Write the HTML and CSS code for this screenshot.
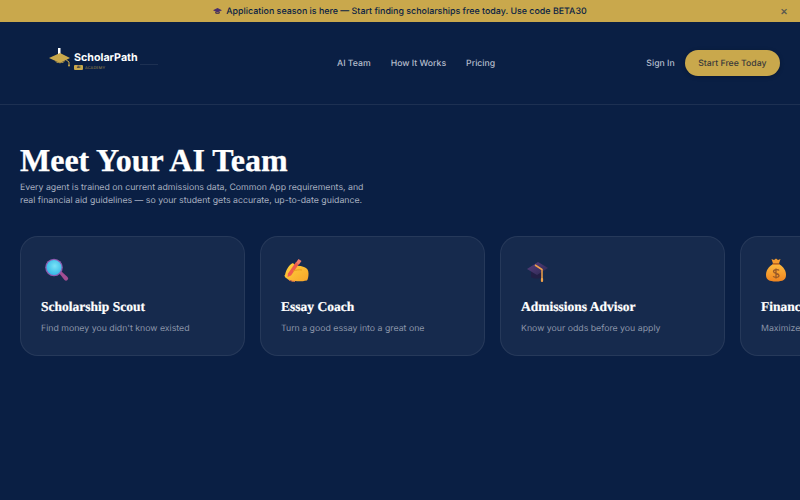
FILE: index.html
```html
<!DOCTYPE html>
<html lang="en">
<head>
<meta charset="utf-8">
<title>ScholarPath</title>
<link rel="stylesheet" href="styles.css">
</head>
<body>
<div class="banner">
  <span class="banner-msg">
    <svg class="banner-cap" viewBox="0 0 12 10"><path d="M0 4 6 1l6 3-6 3z" fill="#4a2f6b"/><path d="M3 6v2c1.500 1 4.500 1 6 0V6L6 7.500z" fill="#33234f"/></svg>
    <span>Application season is here — Start finding scholarships free today. Use code BETA30</span>
  </span>
  <span class="banner-close">×</span>
</div>
<header class="nav">
  <a class="logo">
    <svg class="logo-cap" viewBox="0 0 22 19"><rect x="9" y="0" width="2.500" height="6" fill="#fff"/><path d="M0 10 11 5l10 5-10 5z" fill="#c9a84c"/><path d="M6 13c2 3 8 3 10 0l-5 2z" fill="#c9a84c"/><path d="M16 11l4 3v3" fill="none" stroke="#c9a84c" stroke-width="1"/><circle cx="20" cy="17.500" r="1" fill="#c9a84c"/></svg>
    <span class="logo-text">
      <span class="logo-name">ScholarPath</span>
      <span class="logo-sub"><span class="logo-ai">AI</span><span class="logo-academy">ACADEMY</span></span>
    </span>
  </a>
  <nav class="links">
    <a>AI Team</a>
    <a>How It Works</a>
    <a>Pricing</a>
  </nav>
  <div class="actions">
    <a class="signin">Sign In</a>
    <a class="cta">Start Free Today</a>
  </div>
</header>
<main class="hero">
  <h1>Meet Your AI Team</h1>
  <p class="lead">Every agent is trained on current admissions data, Common App requirements, and real financial aid guidelines — so your student gets accurate, up-to-date guidance.</p>
  <div class="cards">
    <article class="card">
      <svg class="icon" viewBox="0 0 26 26">
        <defs><radialGradient id="lens" cx=".55" cy=".4" r=".6"><stop offset="0" stop-color="#7be3f7"/><stop offset="1" stop-color="#35b9e6"/></radialGradient></defs>
        <path d="M15 15l2.500-1.500 6 5.500a2 2 0 0 1-3 3z" fill="#a34d92"/>
        <circle cx="10" cy="9.500" r="8.800" fill="#8d5bb0"/>
        <circle cx="10" cy="9.500" r="7.500" fill="url(#lens)"/>
      </svg>
      <h3>Scholarship Scout</h3>
      <p>Find money you didn't know existed</p>
    </article>
    <article class="card">
      <svg class="icon" viewBox="0 0 26 26">
        <defs><linearGradient id="hand" x1="0" y1="0" x2="1" y2="1"><stop offset="0" stop-color="#ffd23c"/><stop offset="1" stop-color="#f7a42a"/></linearGradient></defs>
        <path d="M1 17C2 12 5 7 8 5.500c1.500-.5 2.500.5 3 2.500 3-.5 6 0 9 1 3 1 4.500 3 4.500 6.500 0 3-.5 5.500-1.500 7-5 1-8.500 1-12 .5-1.500.5-3.500.5-4-1-2 .5-3.500-.5-4-1.500-1.500-.5-2.500-1.500-2.500-3.500z" fill="url(#hand)"/>
        <path d="M4 15.500 12 4l3 2-8 11.500-3.500 1.500z" fill="#ef5a4c"/>
        <path d="M12 4.500 14.500 1l3 2-2.500 3.500z" fill="#f27a6a"/>
        <path d="M9 13c3-1 6-1.500 9-1" fill="none" stroke="#e89a1e" stroke-width="1"/>
        <path d="M5 22c2 1 4 1.300 6 1.300" fill="none" stroke="#f07a4a" stroke-width="1"/>
      </svg>
      <h3>Essay Coach</h3>
      <p>Turn a good essay into a great one</p>
    </article>
    <article class="card">
      <svg class="icon" viewBox="0 0 26 26">
        <defs><linearGradient id="capg" x1="0" y1="0" x2="1" y2="1"><stop offset="0" stop-color="#5a3f80"/><stop offset="1" stop-color="#2a2850"/></linearGradient></defs>
        <path d="M7 13v6c3 2 8 2 11 0v-6z" fill="#221f45"/>
        <path d="M3 11 14 4l10 6-11 7z" fill="url(#capg)"/>
        <path d="M11 7l7 4.500V21" fill="none" stroke="#f0a24a" stroke-width="1.500"/>
        <rect x="16.900" y="20" width="2.200" height="4" rx="1" fill="#f0a24a"/>
      </svg>
      <h3>Admissions Advisor</h3>
      <p>Know your odds before you apply</p>
    </article>
    <article class="card">
      <svg class="icon" viewBox="0 0 26 26">
        <defs><linearGradient id="bag" x1="0" y1="0" x2="0" y2="1"><stop offset="0" stop-color="#fdba3f"/><stop offset="1" stop-color="#ee8420"/></linearGradient></defs>
        <g transform="translate(-1 -1)">
          <path d="M8.500 2l2.500 1 2-1.500 2 1.500 2.500-1-1.500 4.500h-6z" fill="#f59b2f"/>
          <path d="M10 7h6c5 3 7 7 7 11 0 4.500-3 6.500-10 6.500S3 22.500 3 18c0-4 2-8 7-11z" fill="url(#bag)"/>
          <rect x="9.500" y="6.200" width="7" height="1.600" rx=".8" fill="#c96a1c"/>
          <path d="M16 13.500c-.5-1.300-5.500-1.500-5.500 1 0 2.500 5.500 1.500 5.500 4 0 2.500-5 2.300-5.800.8M13 11.500v10" fill="none" stroke="#9a5a28" stroke-width="1.300"/>
        </g>
      </svg>
      <h3>Financial Aid Expert</h3>
      <p>Maximize every dollar of aid available</p>
    </article>
  </div>
</main>
</body>
</html>
```
FILE: styles.css
```css
* { box-sizing: border-box; }
html, body { margin: 0; height: 100%; }
body {
  width: 800px;
  height: 500px;
  overflow: hidden;
  background: #0a1f44;
  font-family: Inter, "Liberation Sans", sans-serif;
  color: #fff;
  text-rendering: geometricPrecision;
}
.banner {
  height: 22px;
  background: #c9a84c;
  color: #0a1f44;
  display: flex;
  align-items: center;
  justify-content: center;
  font-size: 8.900px;
  font-weight: 500;
  position: relative;
}
.banner-msg { display: flex; align-items: center; gap: 4px; }
.banner-cap { width: 9px; height: 8px; }
.banner-close {
  position: absolute;
  right: 12px;
  top: 3px;
  font-size: 12px;
  line-height: 16px;
  color: #5a5a50;
}
.nav {
  height: 83px;
  border-bottom: 1px solid rgba(255, 255, 255, .08);
  display: flex;
  align-items: center;
  padding: 0 20px;
}
.logo {
  width: 317px;
  padding: 0 0 0 29px;
  display: flex;
  align-items: center;
  gap: 3px;
  margin-top: -12px;
}
.logo-cap { width: 22px; height: 19px; }
.logo-text { display: flex; flex-direction: column; gap: 1px; margin-top: 6px; position: relative; }
.logo-text::after {
  content: "";
  position: absolute;
  left: 66px;
  top: 13px;
  width: 18px;
  height: 1px;
  background: rgba(255, 255, 255, .08);
}
.logo-name { font-size: 10.700px; font-weight: 700; line-height: 13px; }
.logo-sub { display: flex; align-items: center; gap: 2px; }
.logo-ai {
  background: #c9a84c;
  color: #0a1f44;
  font-size: 3.500px;
  font-weight: 700;
  width: 9px;
  height: 5px;
  line-height: 5px;
  border-radius: 1px;
  text-align: center;
}
.logo-academy { font-size: 3.800px; color: #c9a84c; letter-spacing: .2px; opacity: .8; }
.links { display: flex; gap: 20px; padding-top: 2px; font-size: 8.700px; font-weight: 500; color: #b4bccb; }
.actions { margin-left: auto; display: flex; align-items: center; gap: 10px; font-size: 8.700px; font-weight: 500; }
.signin { color: #b4bccb; padding-top: 2px; }
.cta {
  height: 26px;
  padding: 2px 13.500px 0;
  border-radius: 13px;
  background: #c9a84c;
  color: #3a3a3a;
  display: flex;
  align-items: center;
  box-shadow: 0 1px 4px rgba(0, 0, 0, .25);
}
.hero { padding: 39px 0 0 20px; }
h1 {
  margin: 0;
  font-family: "Liberation Serif", serif;
  font-size: 32px;
  line-height: 32px;
  font-weight: 700;
  -webkit-text-stroke: .3px #fff;
}
.lead {
  margin: 6px 0 0;
  width: 350px;
  font-size: 8.750px;
  line-height: 13px;
  color: #a8b0c0;
}
.cards { display: flex; gap: 15px; margin-top: 28px; width: 1000px; }
.card {
  flex: 0 0 225px;
  height: 120px;
  padding: 21px 20px 0;
  background: rgba(255, 255, 255, .05);
  border: 1px solid rgba(255, 255, 255, .07);
  border-radius: 18px;
}
.icon { display: block; width: 26px; height: 26px; margin: 0 0 0 3px; }
h3 {
  margin: 14px 0 0;
  font-family: "Liberation Serif", serif;
  font-size: 13.500px;
  line-height: 18px;
  font-weight: 700;
  -webkit-text-stroke: .2px #fff;
}
.card p {
  margin: 7px 0 0;
  font-size: 8.750px;
  line-height: 13px;
  color: #8b95a9;
}
```
